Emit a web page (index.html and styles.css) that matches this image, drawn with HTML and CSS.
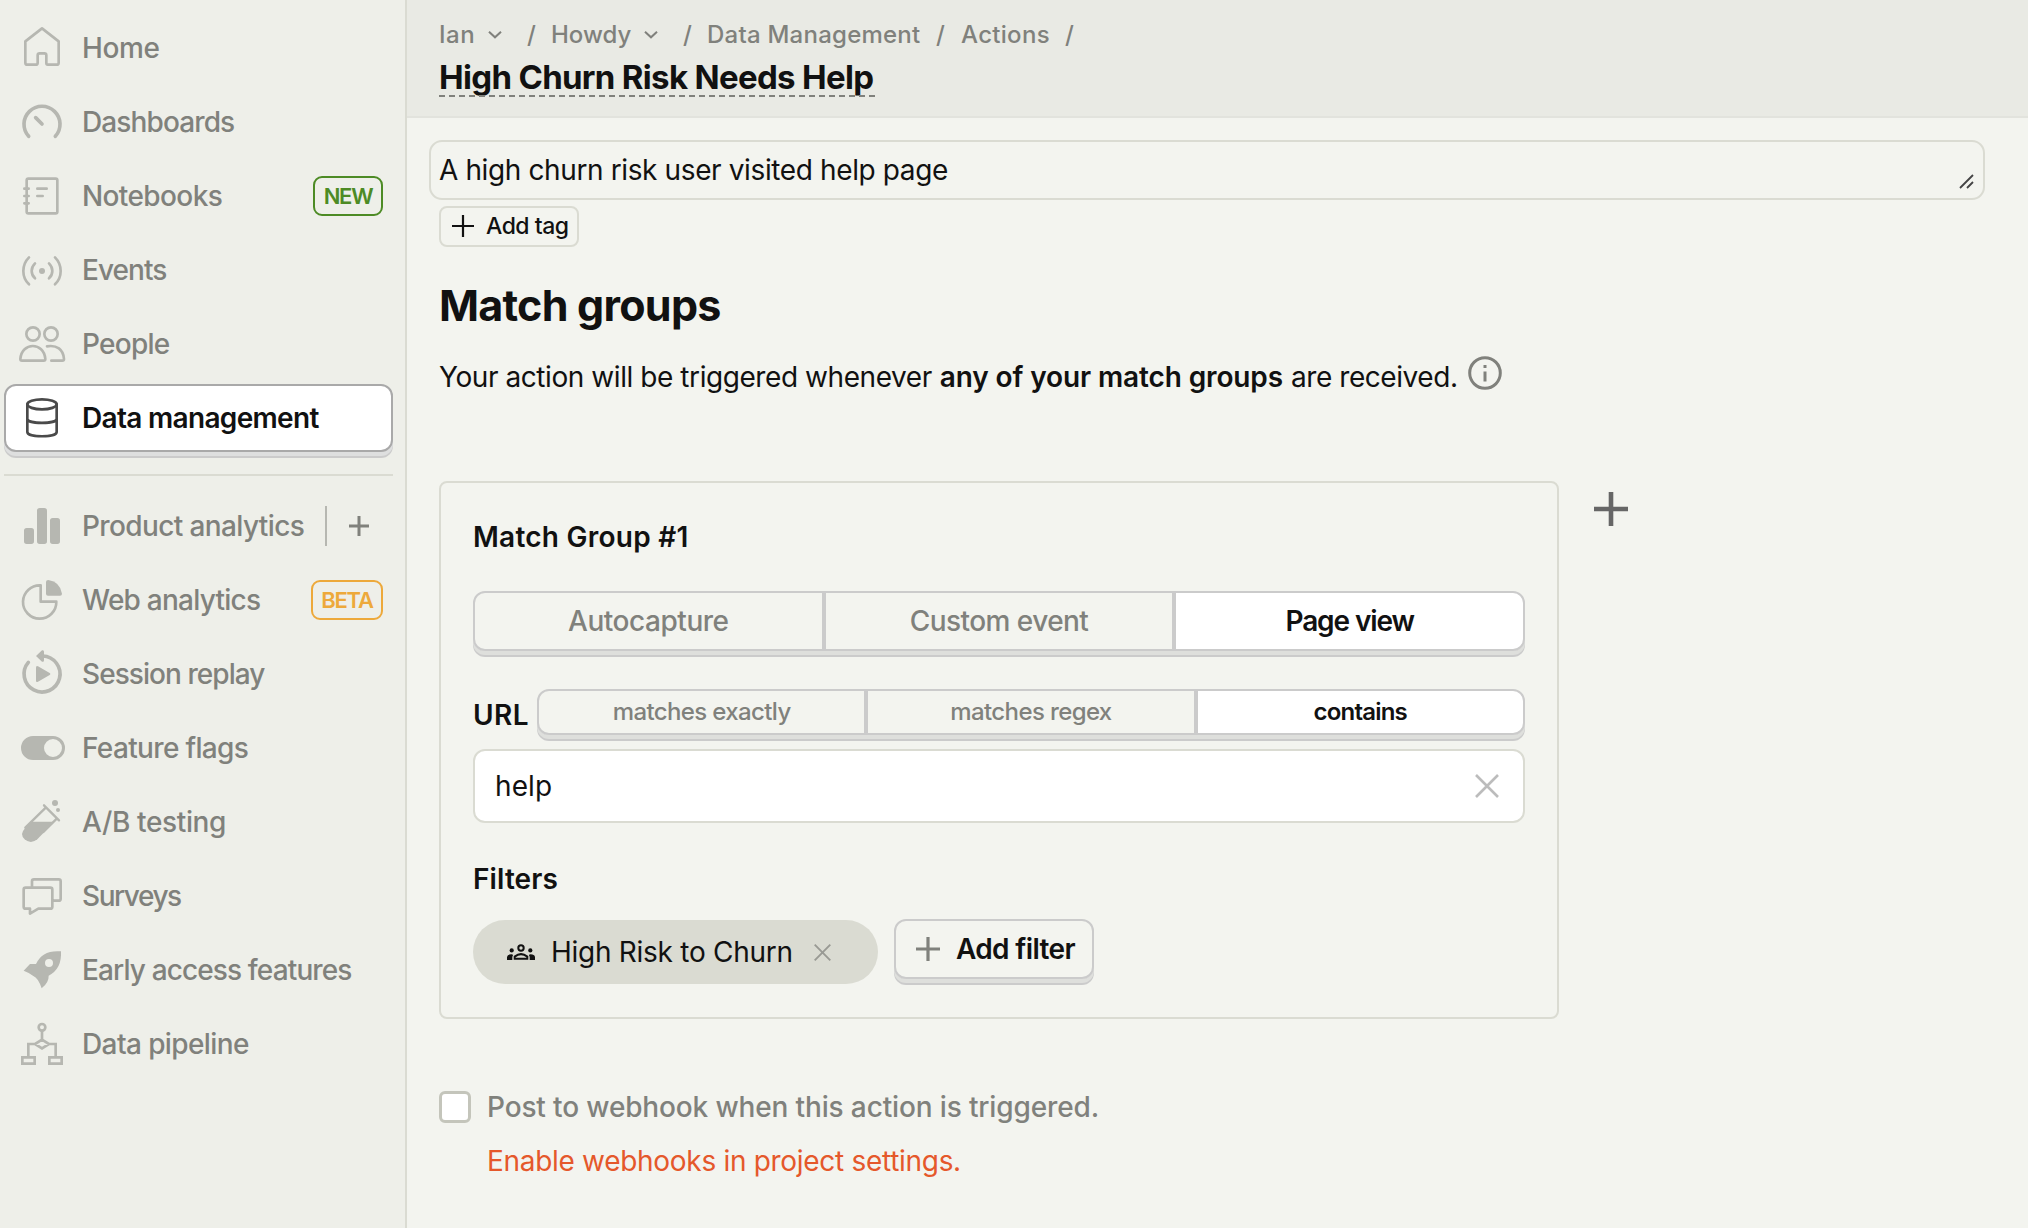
FILE: index.html
```
<!DOCTYPE html>
<html lang="en">
<head>
<meta charset="utf-8">
<title>High Churn Risk Needs Help</title>
<link rel="stylesheet" href="styles.css">
</head>
<body>
<div class="app">
  <nav class="sidebar">
    <a class="item home"><svg class="icon" viewBox="54 72 144 144"><path class="line" d="M126 85 L176 124 V188 Q176 194 170 194 H143 Q139 194 139 189 V166 Q139 160 133 160 H119 Q113 160 113 166 V188 Q113 194 107 194 H82 Q76 194 76 188 V124 Z"/></svg><span>Home</span></a>
    <a class="item dashboards"><svg class="icon" viewBox="54 294 144 144"><path class="line thick" d="M86 409 A54 54 0 1 1 166 409 M107 353 L126 372"/></svg><span>Dashboards</span></a>
    <a class="item notebooks"><svg class="icon" viewBox="54 516 144 144"><rect class="line" x="80" y="536" width="92" height="104" rx="5"/><path class="line" d="M73 566 H86 M73 588 H86 M73 610 H86 M112 566 H140 M112 588 H128"/></svg><span>Notebooks</span><b class="tag new">NEW</b></a>
    <a class="item events"><svg class="icon" viewBox="54 738 144 144"><circle class="solid" cx="126" cy="813" r="9"/><path class="line" d="M87 772 Q70 789 70 813 T87 853 M165 772 Q182 789 182 813 T165 853 M105 790 Q95 800 95 813 T105 835 M147 790 Q157 800 157 813 T147 835"/></svg><span>Events</span></a>
    <a class="item people"><svg class="icon" viewBox="54 60 144 144"><circle class="line" cx="99" cy="102" r="20"/><circle class="line" cx="153" cy="102" r="20"/><path class="line" d="M61 177 C65 125 132 125 136 177 Q136 182 131 182 H66 Q61 182 61 177 Z M141 139 C170 134 190 148 192 177 Q192 182 187 182 H154"/></svg><span>People</span></a>
    <a class="item active management"><svg class="icon" viewBox="54 282 144 144"><ellipse class="line" cx="126" cy="313" rx="44" ry="15"/><path class="line" d="M82 313 V396 C82 413 170 413 170 396 V313 M82 356 C82 373 170 373 170 356"/></svg><span>Data management</span></a>
    <hr class="rule">
    <a class="item product"><svg class="icon" viewBox="54 606 144 144"><path class="solid" d="M80 684 H94 Q102 684 102 692 V724 Q102 732 94 732 H80 Q72 732 72 724 V692 Q72 684 80 684 Z M119 624 H133 Q141 624 141 632 V724 Q141 732 133 732 H119 Q111 732 111 724 V632 Q111 624 119 624 Z M158 654 H172 Q180 654 180 662 V724 Q180 732 172 732 H158 Q150 732 150 724 V662 Q150 654 158 654 Z"/></svg><span>Product analytics</span><i class="bar"></i><svg class="add" viewBox="0 0 20 20"><path d="M10 0V20M0 10H20"/></svg></a>
    <a class="item web"><svg class="icon" viewBox="54 828 144 144"><path class="line" d="M122 856 A50 50 0 1 0 169 905 H122 Z"/><path class="solid" d="M138 846 Q138 840 145 840 Q181 846 186 881 Q186 887 180 887 H144 Q138 887 138 881 Z"/></svg><span>Web analytics</span><b class="tag beta">BETA</b></a>
    <a class="item session"><svg class="icon" viewBox="54 150 144 144"><path class="line thick" d="M85 187 A54 54 0 1 0 128 168"/><path class="solid" d="M108 168 L126 151 Q132 149 132 155 V181 Q132 187 126 185 Z M108 203 Q108 196 114 199 L149 219 Q153 222 149 225 L114 245 Q108 248 108 242 Z"/></svg><span>Session replay</span></a>
    <a class="item flags"><svg class="icon" viewBox="54 372 144 144"><path class="solid" fill-rule="evenodd" d="M99 408 H159 A36 36 0 0 1 159 480 H99 A36 36 0 0 1 99 408 Z M159 417 A27 27 0 1 0 159 471 A27 27 0 1 0 159 417 Z"/></svg><span>Feature flags</span></a>
    <a class="item testing"><svg class="icon" viewBox="54 594 144 144"><path class="line thin" d="M132 616 L177 661 M138 622 L76 683 M171 655 L130 696"/><path class="solid" d="M96 665 H163 L112 718 Q92 734 74 718 Q58 702 74 686 Z"/><circle class="solid" cx="165" cy="609" r="9"/><circle class="solid" cx="174" cy="630" r="6"/></svg><span>A/B testing</span></a>
    <a class="item surveys"><svg class="icon" viewBox="54 126 144 144"><path class="line" d="M96 170 V154 Q96 148 102 148 H176 Q182 148 182 154 V206 Q182 212 176 212 H161 M77 173 H151 Q157 173 157 179 V230 Q157 236 151 236 H115 L90 251 V236 H77 Q71 236 71 230 V179 Q71 173 77 173 Z"/></svg><span>Surveys</span></a>
    <a class="item early"><svg class="icon" viewBox="54 348 144 144"><path class="solid" fill-rule="evenodd" d="M183 364 Q186 417 146 437 Q147 457 125 475 Q114 443 100 438 Q90 429 71 422 L90 402 H108 Q127 359 183 364 Z M147 387 A12 12 0 1 0 147 411 A12 12 0 1 0 147 387 Z"/></svg><span>Early access features</span></a>
    <a class="item pipeline"><svg class="icon" viewBox="54 570 144 144"><circle class="line" cx="126" cy="592" r="10"/><path class="line miter" d="M126 602 V629 M104 642 H85 V680 M148 642 H167 V680 M126 629 L147 642 L126 655 L105 642 Z M67 682 H104 V701 H67 Z M148 682 H185 V701 H148 Z"/></svg><span>Data pipeline</span></a>
  </nav>

  <main class="main">
    <header class="top">
      <div class="crumbs">
        <span class="ian">Ian</span><svg class="chev" viewBox="0 0 12 7"><path d="M0 .7L6 6.300L12 .7"/></svg><em>/</em>
        <span class="howdy">Howdy</span><svg class="chev" viewBox="0 0 12 7"><path d="M0 .7L6 6.300L12 .7"/></svg><em>/</em>
        <span class="dm">Data Management</span><em class="near">/</em>
        <span class="actions">Actions</span><em class="near">/</em>
      </div>
      <h1 class="title"><span>High Churn Risk Needs Help</span><svg class="dash" viewBox="0 0 440 2"><path d="M0 1H440"/></svg></h1>
    </header>
    <div class="content">
      <div class="description"><span>A high churn risk user visited help page</span><svg class="grip" viewBox="0 0 16 16"><path d="M1 14L14 1M8 14L14 8"/></svg></div>
      <button class="add-tag"><svg viewBox="0 0 20 20"><path d="M10 0V20M0 10H20"/></svg><span>Add tag</span></button>
      <h2 class="heading">Match groups</h2>
      <p class="intro"><span>Your action will be triggered whenever</span><b>any of your match groups</b><span>are received.</span><svg class="info" viewBox="0 0 34 34"><circle cx="17" cy="17" r="15.3"/><path d="M17 15.5V25.5M17 9V12"/></svg></p>
      <div class="groups">
        <section class="card">
          <h3 class="card-title">Match Group #1</h3>
          <div class="segment">
            <button class="autocapture">Autocapture</button><button class="custom">Custom event</button><button class="on pageview">Page view</button>
          </div>
          <div class="url-row">
            <label class="url">URL</label>
            <div class="segment small">
              <button>matches exactly</button><button>matches regex</button><button class="on contains">contains</button>
            </div>
          </div>
          <div class="input"><span>help</span><svg viewBox="0 0 24 24"><path d="M1 1L23 23M23 1L1 23"/></svg></div>
          <h3 class="filters-title">Filters</h3>
          <div class="filters">
            <div class="chip">
              <svg class="group" viewBox="0 0 28 16"><circle class="ring" cx="14" cy="4" r="2.7"/><path class="ring" d="M7.7 14.7V12.6Q14 7.6 20.3 12.6V14.7Z"/><circle cx="4.7" cy="6.4" r="2.1"/><circle cx="23.3" cy="6.4" r="2.1"/><path d="M0 16V13Q.5 10 5.6 10.4L6 11.5Q5.3 12 5.3 13.5V16ZM28 16V13Q27.500 10 22.400 10.400L22 11.500Q22.700 12 22.700 13.500V16Z"/></svg>
              <span>High Risk to Churn</span>
              <svg class="close" viewBox="0 0 17 17"><path d="M.7 .7L16.300 16.300M16.300 .7L.7 16.300"/></svg>
            </div>
            <button class="add-filter"><svg viewBox="0 0 24 24"><path d="M12 0V24M0 12H24"/></svg><span>Add filter</span></button>
          </div>
        </section>
        <svg class="plus" viewBox="0 0 34 34"><path d="M17 0V34M0 17H34"/></svg>
      </div>
      <label class="webhook"><i class="box"></i><span>Post to webhook when this action is triggered.</span></label>
      <a class="enable">Enable webhooks in project settings.</a>
    </div>
  </main>
</div>
</body>
</html>
```
FILE: styles.css
```
* { box-sizing: border-box; }
body { margin: 0; font-family: Inter, "Liberation Sans", sans-serif; font-size: 28px; color: #111; background: #f3f4ef; }
svg { display: block; flex: none; fill: none; stroke: currentColor; }
h1, h2, h3, p { margin: 0; }
button { font: inherit; color: inherit; padding: 0; background: none; border: 0; }
span, b, a, button { white-space: nowrap; }
.app { display: flex; height: 1228px; overflow: hidden; }

/* Sidebar */
.sidebar { flex: none; width: 407px; padding: 14px 12px 0 4px; background: #eeefe9; border-right: 2px solid #dadbd2; }
.item { display: flex; align-items: center; height: 68px; margin-bottom: 6px; padding: 0 8px 0 12px; border: 2px solid transparent; border-radius: 12px; font-weight: 540; color: #80817c; }
.item > span { margin-right: auto; padding-left: 16px; }
.icon { width: 48px; height: 48px; color: #b6b7b1; }
.line { stroke-width: 8; stroke-linecap: round; stroke-linejoin: round; }
.thick { stroke-width: 11; }
.thin { stroke-width: 7; }
.miter { stroke-linecap: butt; stroke-linejoin: miter; }
.solid { fill: currentColor; stroke: none; }
.active { margin-bottom: 22px; background: #fff; border-color: #a9a9a9; color: #111; font-weight: 600; box-shadow: 0 4px 0 #dedfdf, 0 6px 0 #cbcbcb; }
.active .icon { color: #4a4a4a; }
.rule { height: 2px; margin: 0 0 16px; border: 0; background: #dadbd2; }
.tag { height: 40px; padding: 0 7px; border: 2px solid; border-radius: 9px; font-size: 22px; line-height: 36px; font-weight: 600; text-align: center; }
.new { width: 70px; color: #4d8b25; letter-spacing: -1.3px; }
.beta { width: 72px; color: #eda93b; letter-spacing: -1.2px; }
.bar { width: 2px; height: 40px; margin-right: 22px; background: #b6b7b1; }
.add { width: 20px; height: 20px; margin-right: 14px; stroke-width: 3; }
.home { letter-spacing: -.35px; }
.dashboards { letter-spacing: -.88px; }
.notebooks { letter-spacing: -.61px; }
.events { letter-spacing: -.95px; }
.people { letter-spacing: -.75px; }
.management { letter-spacing: -.68px; }
.product { letter-spacing: -.62px; }
.web { letter-spacing: -.76px; }
.session { letter-spacing: -.94px; }
.flags { letter-spacing: -.65px; }
.testing { letter-spacing: -.37px; }
.surveys { letter-spacing: -1.45px; }
.early { letter-spacing: -.87px; }
.pipeline { letter-spacing: -.6px; }

/* Header */
.main { flex: 1; min-width: 0; }
.top { height: 118px; padding: 18px 0 0 32px; background: #e9eae4; border-bottom: 2px solid #e2e3dd; }
.crumbs { display: flex; align-items: center; height: 33px; font-size: 24px; font-weight: 540; color: #80817c; letter-spacing: .24px; }
.crumbs span { flex: none; }
.crumbs .ian { width: 50px; letter-spacing: .5px; }
.crumbs .howdy { width: 94px; letter-spacing: 0; }
.crumbs .dm { width: 214px; }
.crumbs .actions { width: 89px; letter-spacing: .3px; }
.crumbs em { width: 24px; margin-left: 26px; font-style: normal; }
.crumbs .near { width: 25px; margin-left: 15px; }
.chev { width: 12px; height: 7px; stroke-width: 2; overflow: visible; }
.title { display: block; margin-top: 8px; width: 440px; font-size: 33px; line-height: 36px; font-weight: 700; letter-spacing: -.68px; }
.dash { width: 440px; height: 2px; color: #80817c; stroke-width: 2; stroke-dasharray: 6 4; }

/* Content */
.content { padding: 22px 0 0 32px; }
.description { display: flex; align-items: center; justify-content: space-between; width: 1556px; height: 60px; margin-left: -10px; padding: 0 8px 0 8px; border: 2px solid #dadbd2; border-radius: 13px; letter-spacing: -.38px; }
.grip { width: 16px; height: 16px; margin-top: 24px; stroke-width: 1.8; color: #444; }
.add-tag { display: flex; align-items: center; gap: 12px; width: 140px; height: 41px; margin-top: 6px; padding: 0 0 2px 11px; border: 2px solid #dadbd2; border-radius: 8px; font-size: 23px; font-weight: 540; letter-spacing: -.5px; }
.add-tag svg { width: 22px; height: 22px; stroke-width: 2; }
.heading { margin: 32px 0 0; font-size: 43px; line-height: 52px; font-weight: 700; letter-spacing: -.75px; }
.intro { display: flex; gap: 8px; margin-top: 26px; height: 40px; line-height: 40px; letter-spacing: -.43px; }
.intro b { font-weight: 600; letter-spacing: -.12px; }
.info { width: 34px; height: 34px; margin-left: 2px; margin-top: -1px; stroke-width: 3; color: #80817c; }
.groups { display: flex; margin-top: 84px; }
.card { width: 1120px; height: 538px; padding: 34px 32px 0; border: 2px solid #dadbd2; border-radius: 8px; }
.card-title, .filters-title { height: 40px; font-size: 28px; line-height: 40px; font-weight: 600; letter-spacing: .25px; }
.segment { display: flex; width: 1052px; height: 60px; margin-top: 34px; border-radius: 12px; box-shadow: 0 4px 0 #dedfdc, 0 6px 0 #cbcbcb; }
.segment button { flex: 1 1 0; border: 2px solid #cbcbcb; background: #f3f4ef; font-weight: 540; color: #80817c; letter-spacing: -.56px; }
.segment button:first-child { border-radius: 12px 0 0 12px; }
.segment button:last-child { border-radius: 0 12px 12px 0; }
.segment .on { background: #fff; color: #111; font-weight: 600; letter-spacing: -.9px; }
.segment .autocapture { letter-spacing: -.46px; }
.segment .pageview { letter-spacing: -1.1px; }
.url-row { display: flex; align-items: center; justify-content: space-between; height: 52px; margin-top: 38px; }
.url { font-weight: 600; letter-spacing: .4px; }
.small { width: 988px; height: 46px; margin: -6px 0 0; font-size: 24px; }
.small button { padding-bottom: 1px; letter-spacing: -.62px; }
.small .on { letter-spacing: -.8px; }
.input { display: flex; align-items: center; justify-content: space-between; width: 1052px; height: 74px; margin-top: 8px; padding: 0 24px 0 20px; border: 2px solid #dadbd2; border-radius: 12px; background: #fff; letter-spacing: .11px; }
.input svg { width: 24px; height: 24px; color: #bcbcbc; stroke-width: 2.600; }
.filters-title { margin-top: 36px; letter-spacing: .12px; }
.filters { display: flex; margin-top: 20px; }
.chip { display: flex; align-items: center; width: 405px; height: 64px; margin-top: 1px; padding-left: 34px; border-radius: 32px; background: #dadbd2; letter-spacing: -.27px; }
.group { width: 28px; height: 16px; stroke: none; fill: #111; }
.group .ring { fill: none; stroke: #111; stroke-width: 2; }
.chip span { width: 264px; padding-left: 16px; }
.close { width: 17px; height: 17px; margin-left: 15px; color: #999a94; stroke-width: 1.900; }
.add-filter { display: flex; align-items: center; gap: 16px; width: 200px; height: 60px; margin-left: 16px; padding-left: 20px; border: 2px solid #cbcbcb; border-radius: 12px; font-weight: 600; letter-spacing: -.65px; box-shadow: 0 4px 0 #dedfdc, 0 6px 0 #cbcbcb; }
.add-filter svg { width: 24px; height: 24px; color: #80817c; stroke-width: 3.200; }
.plus { width: 34px; height: 34px; margin: 11px 0 0 35px; color: #666; stroke-width: 4.600; }
.webhook { display: flex; align-items: center; height: 40px; margin-top: 68px; color: #80817c; font-weight: 500; letter-spacing: -.14px; }
.box { width: 32px; height: 32px; margin-right: 16px; border: 3px solid #c4c5bb; border-radius: 6px; background: #fff; }
.enable { display: block; margin: 14px 0 0 48px; line-height: 40px; color: #e5582b; letter-spacing: -.3px; }
```
